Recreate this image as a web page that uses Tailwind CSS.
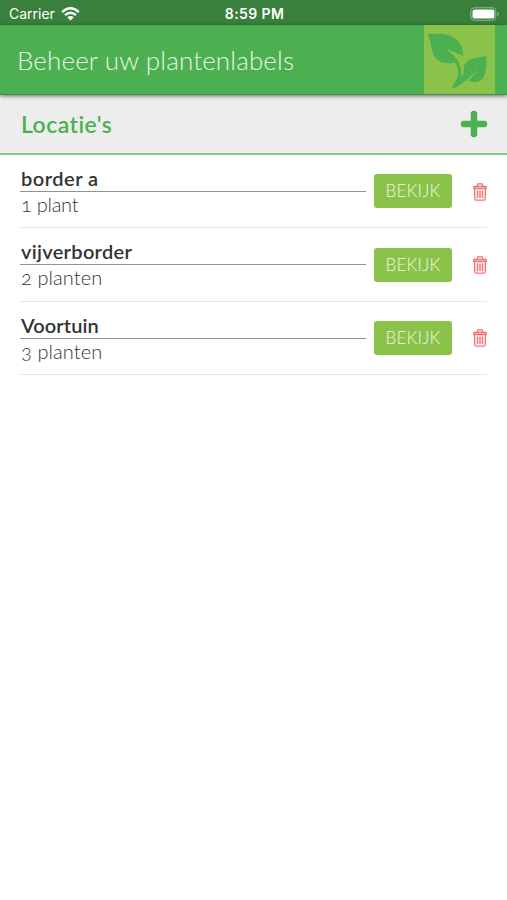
<!DOCTYPE html>
<html lang="nl">
<head>
<meta charset="utf-8">
<title>Beheer uw plantenlabels</title>
<script src="https://cdn.jsdelivr.net/npm/@tailwindcss/browser@4"></script>
</head>
<body class="h-[900px] w-[507px] overflow-hidden bg-white font-['Lato',sans-serif] [font-feature-settings:'onum','liga'_0]">
<svg class="hidden">
  <symbol id="trash" viewBox="0 0 14 18"><g fill="none" stroke="#f4716a" stroke-linecap="round" stroke-linejoin="round"><path d="M.8 3.500h12.400v2H.8zM4.500 3.300V1.600q0-.8.8-.8h3.400q.8 0 .8.8v1.700M1.600 5.700l.2 10.100q.1 1.300 1.300 1.300h7.800q1.200 0 1.300-1.300l.2-10.100" stroke-width="1.300"/><path d="M4.500 8v6.500M7 8v6.500M9.500 8v6.500" stroke-width="1.400"/></g></symbol>
</svg>
<div class="flex h-[25px] items-center justify-between bg-[#38803b] pt-[2px] pr-[7px] pl-[9px] font-['Inter',sans-serif] text-white [font-feature-settings:normal]">
  <div class="flex w-[150px] items-center gap-[6px] text-[14px] leading-none">
    <span>Carrier</span>
    <svg class="h-[14px] w-[19px]" viewBox="0 0 19 14" fill="none" stroke="#fff" stroke-width="2.4"><path d="M1.200 5.100Q9.500-2.500 17.800 5.100M4.100 8.200q5.400-4.700 10.800 0"/><path d="M9.500 13.500L6.300 10.300q3.200-2.600 6.400 0z" fill="#fff" stroke="none"/></svg>
  </div>
  <span class="text-[14px] leading-none font-semibold tracking-[0.4px]">8:59 PM</span>
  <div class="flex w-[150px] justify-end">
    <svg class="h-[14px] w-[31px]" viewBox="0 0 31 14"><rect x="1.800" y=".8" width="25" height="12.400" rx="3.800" fill="none" stroke="#8fb891" stroke-width="1.100"/><rect x="3.500" y="2.400" width="21.800" height="9.200" rx="2.200" fill="#fff"/><path d="M28.500 4.800q3 2.200 0 4.400z" fill="#8fb891"/></svg>
  </div>
</div>
<header class="relative flex h-[70px] items-center justify-between border-b border-[#439047] bg-[#4caf50] pr-[12px] pl-[17px] shadow-[0_1px_4px_rgba(0,0,0,0.55)]">
  <h1 class="text-[26px] leading-none font-light tracking-[0.130px] whitespace-nowrap text-[#e6f5e6]">Beheer uw plantenlabels</h1>
  <svg class="h-[69px] w-[71px] bg-[#8bc34a]" viewBox="0 0 71 69" fill="#4caf50"><path d="M3.300 8.700C11 9 20 7.500 28 11.500c8 4.500 11 11 11.300 19.200C33 28.500 27 26 21 23.300c4.500 3.500 10 7 14 14.500 2 4.500 3 9.500 2 13.500l3-3c-1-5 0-9.500 4-12.500C49 32 56 32.500 62 31c.5 7 1 14-2 20-3 6-8 7.500-15.500 4.500 3.500-3.500 7-7 9.500-12-4.500 6-9 9-13.500 13L31.500 62.800q-2 .2-4-.8c4-4 6.500-9 6.500-14.500 0-4-1-7-3-10-8 2-15 .5-19.500-4.500C6 25.500 8 16 3.300 8.700z"/></svg>
</header>
<section class="flex h-[60px] items-center justify-between border-b-2 border-[#86c989] bg-[#ededed] pr-[19px] pl-[21px]">
  <h2 class="pt-px text-[23px] leading-none font-semibold tracking-[0.450px] text-[#4caf50]">Locatie's</h2>
  <svg class="h-[28px] w-[28px]" viewBox="0 0 28 28" fill="none" stroke="#4caf50" stroke-width="6.500" stroke-linecap="round"><path d="M14 4v20M4 14h20"/></svg>
</section>
<main class="px-[20px] text-[#333]">
  <article class="flex h-[73.300px] items-center border-b border-[#e8e8e8]">
    <div class="w-[346px] pt-px"><h3 class="flex h-[26px] items-center border-b-[1.500px] border-[#929292] pb-px pl-px text-[20px] leading-none font-semibold tracking-[0.500px]">border a</h3><p class="flex h-[26px] items-center pb-[2px] pl-px text-[20px] leading-none font-light tracking-[-0.250px] text-[#333]">1 plant</p></div>
    <button class="ml-[8px] h-[34px] w-[78px] rounded-[3px] bg-[#8bc34a] text-[17px] font-light tracking-[0.200px] text-[#edf6e2]">BEKIJK</button>
    <svg class="mt-px ml-[21px] h-[18px] w-[14px]"><use href="#trash"/></svg>
  </article>
  <article class="flex h-[73.300px] items-center border-b border-[#e8e8e8]">
    <div class="w-[346px] pt-px"><h3 class="flex h-[26px] items-center border-b-[1.500px] border-[#929292] pb-px pl-px text-[20px] leading-none font-semibold tracking-[0.300px]">vijverborder</h3><p class="flex h-[26px] items-center pb-[2px] pl-px text-[20px] leading-none font-light tracking-[0.100px] text-[#333]">2 planten</p></div>
    <button class="mt-px ml-[8px] h-[34px] w-[78px] rounded-[3px] bg-[#8bc34a] text-[17px] font-light tracking-[0.200px] text-[#edf6e2]">BEKIJK</button>
    <svg class="mt-px ml-[21px] h-[18px] w-[14px]"><use href="#trash"/></svg>
  </article>
  <article class="flex h-[73.300px] items-center border-b border-[#e8e8e8]">
    <div class="w-[346px] pt-[2px]"><h3 class="flex h-[26px] items-center border-b-[1.500px] border-[#929292] pb-px pl-px text-[20px] leading-none font-semibold tracking-[0.100px]">Voortuin</h3><p class="flex h-[26px] items-center pb-[2px] pl-px text-[20px] leading-none font-light tracking-[0.100px] text-[#333]">3 planten</p></div>
    <button class="mt-px ml-[8px] h-[34px] w-[78px] rounded-[3px] bg-[#8bc34a] text-[17px] font-light tracking-[0.200px] text-[#edf6e2]">BEKIJK</button>
    <svg class="mt-px ml-[21px] h-[18px] w-[14px]"><use href="#trash"/></svg>
  </article>
</main>
</body>
</html>
